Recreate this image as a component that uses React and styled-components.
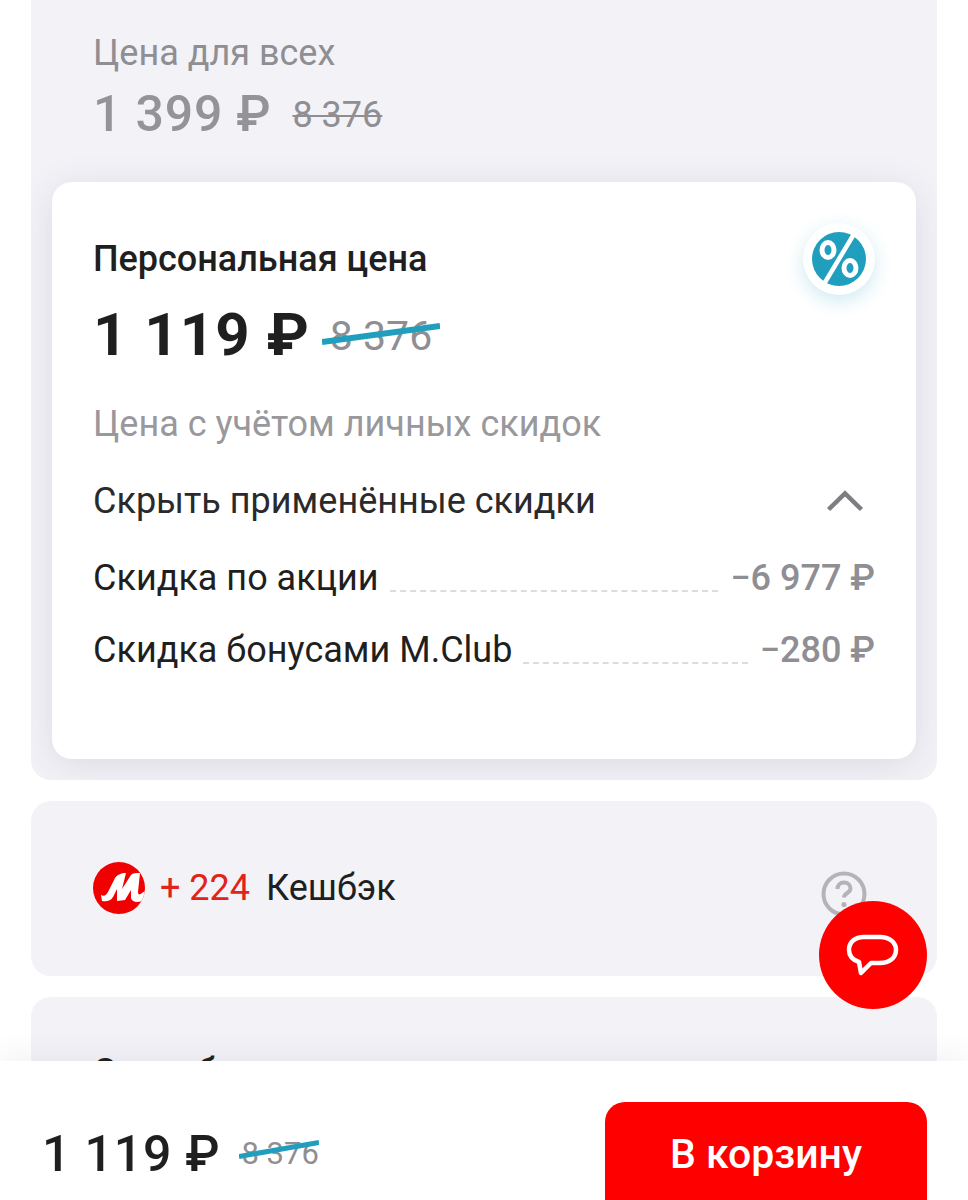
import React from "react";
import styled, { createGlobalStyle } from "styled-components";

const GlobalStyle = createGlobalStyle`
  html, body {
    margin: 0;
    padding: 0;
    background: #fff;
  }
  body {
    font-family: Roboto, "Liberation Sans", sans-serif;
    color: #1f1f1f;
  }
`;

const Page = styled.div`
  position: relative;
  width: 968px;
  height: 1200px;
  overflow: hidden;
  background: #fff;
`;

const Content = styled.div`
  display: flex;
  flex-direction: column;
  gap: 21px;
  padding: 0 31px;
  margin-top: -24px;
`;

const Panel = styled.section`
  background: #f2f2f7;
  border-radius: 20px;
  height: ${(p) => p.$height}px;
  box-sizing: border-box;
  padding: ${(p) => p.$padding};
  overflow: hidden;
`;

const GuestLabel = styled.div`
  font-size: 36px;
  line-height: 40px;
  color: #8e8e93;
  margin-left: 62px;
`;

const PriceRow = styled.div`
  display: flex;
  align-items: baseline;
  gap: ${(p) => p.$gap || 22}px;
  margin-left: ${(p) => p.$left || 0}px;
  margin-top: ${(p) => p.$top || 0}px;
`;

const Price = styled.span`
  font-size: ${(p) => p.$size}px;
  font-weight: ${(p) => p.$weight || 500};
  line-height: 1.2;
  letter-spacing: ${(p) => p.$spacing || 0}px;
  color: ${(p) => p.$color || "#1f1f1f"};
  white-space: nowrap;
`;

const OldPrice = styled.span`
  position: relative;
  top: -${(p) => p.$raise || 5}px;
  font-size: ${(p) => p.$size || 36}px;
  color: #8e8e93;
  white-space: nowrap;
  text-decoration: ${(p) => (p.$struck ? "line-through" : "none")};
  text-decoration-thickness: 2px;
`;

const TealStrike = styled.svg`
  position: absolute;
  left: ${(p) => p.$left}px;
  top: ${(p) => p.$top}px;
  width: ${(p) => p.$w}px;
  height: ${(p) => p.$h}px;
`;

const Card = styled.div`
  position: relative;
  background: #fff;
  border-radius: 20px;
  height: 577px;
  margin-top: 38px;
  margin-left: 21px;
  margin-right: 21px;
  box-sizing: border-box;
  padding: 55px 41px 0 41px;
  box-shadow: 0 6px 36px rgba(60, 60, 80, 0.12);
`;

const CardTitle = styled.div`
  font-size: 36px;
  line-height: 44px;
  font-weight: 500;
  color: #1f1f1f;
`;

const Hint = styled.div`
  font-size: 36px;
  line-height: 44px;
  color: #98989d;
  margin-top: 31px;
`;

const ToggleRow = styled.div`
  display: flex;
  align-items: center;
  justify-content: space-between;
  margin-top: 33px;
  font-size: 36px;
  line-height: 44px;
  color: #2a2a2d;
`;

const Discounts = styled.div`
  display: flex;
  flex-direction: column;
  gap: 28px;
  margin-top: 33px;
`;

const DiscountRow = styled.div`
  display: flex;
  align-items: baseline;
  font-size: 36px;
  line-height: 44px;
`;

const DiscountName = styled.span`
  color: #1f1f1f;
  white-space: nowrap;
`;

const Dots = styled.span`
  flex: 1;
  border-bottom: 2px dashed #dcdcdf;
  margin: 0 12px 0 11px;
  transform: translateY(2px);
`;

const DiscountValue = styled.span`
  color: #8e8e93;
  font-weight: 500;
  white-space: nowrap;
`;

const PercentBadge = styled.div`
  position: absolute;
  top: 41px;
  right: 41px;
  width: 72px;
  height: 72px;
  border-radius: 50%;
  background: #fff;
  display: flex;
  align-items: center;
  justify-content: center;
  box-shadow: 0 6px 18px rgba(30, 160, 190, 0.22);
`;

const CashbackRow = styled.div`
  display: flex;
  align-items: center;
  font-size: 36px;
  line-height: 44px;
`;

const Bonus = styled.span`
  color: #e2231a;
  margin-left: 15px;
`;

const CashbackLabel = styled.span`
  color: #1f1f1f;
  margin-left: 16px;
`;

const HelpIcon = styled.svg`
  width: 46px;
  height: 46px;
  margin-left: auto;
  margin-top: 12px;
`;

const SectionTitle = styled.div`
  font-size: 36px;
  line-height: 44px;
  font-weight: 500;
  margin-left: 42px;
`;

const ChatButton = styled.button`
  position: absolute;
  left: 819px;
  top: 901px;
  width: 108px;
  height: 108px;
  border: none;
  border-radius: 50%;
  background: #ff0000;
  display: flex;
  align-items: center;
  justify-content: center;
  padding: 0;
`;

const BottomBar = styled.div`
  position: absolute;
  left: 0;
  right: 0;
  top: 1061px;
  height: 139px;
  background: #fff;
  box-shadow: 0 -8px 24px rgba(60, 60, 80, 0.06);
  display: flex;
  align-items: flex-start;
  justify-content: space-between;
  padding: 41px 41px 0 42px;
  box-sizing: border-box;
`;

const BuyButton = styled.button`
  width: 322px;
  height: 120px;
  border: none;
  border-radius: 20px;
  background: #ff0000;
  color: #fff;
  font-family: inherit;
  font-size: 41px;
  font-weight: 500;
  padding: 0 0 17px;
`;

const Strike = ({ left, top, w, h, thick = 6 }) => (
  <TealStrike $left={left} $top={top} $w={w} $h={h} viewBox={`0 0 ${w} ${h}`}>
    <line x1="0" y1={h - thick / 2} x2={w} y2={thick / 2} stroke="#1f9fbd" strokeWidth={thick} />
  </TealStrike>
);

export default function App() {
  return (
    <Page>
      <GlobalStyle />
      <Content>
        <Panel $height={804} $padding="57px 0 0">
          <GuestLabel>Цена для всех</GuestLabel>
          <PriceRow $left={62} $top={11} $gap={21}>
            <Price $size={50} $color="#939398" $spacing={0.8}>1 399 ₽</Price>
            <OldPrice $size={36} $raise={4} $struck>8 376</OldPrice>
          </PriceRow>
          <Card>
            <CardTitle>Персональная цена</CardTitle>
            <PriceRow $top={18} $gap={20}>
              <Price $size={60} $weight={700} $spacing={1}>1 119 ₽</Price>
              <OldPrice $size={41}>
                8 376
                <Strike left={-8} top={11} w={118} h={22} />
              </OldPrice>
            </PriceRow>
            <Hint>Цена с учётом личных скидок</Hint>
            <ToggleRow>
              Скрыть применённые скидки
              <svg width="38" height="22" viewBox="0 0 38 22" style={{ marginRight: 11 }}>
                <path d="M2.5 19.5 19 3.5l16.5 16" fill="none" stroke="#7d7d82" strokeWidth="4.5" />
              </svg>
            </ToggleRow>
            <Discounts>
              <DiscountRow>
                <DiscountName>Скидка по акции</DiscountName>
                <Dots />
                <DiscountValue>−6 977 ₽</DiscountValue>
              </DiscountRow>
              <DiscountRow>
                <DiscountName>Скидка бонусами M.Club</DiscountName>
                <Dots />
                <DiscountValue>−280 ₽</DiscountValue>
              </DiscountRow>
            </Discounts>
            <PercentBadge>
              <svg width="54" height="54" viewBox="0 0 54 54">
                <circle cx="27" cy="27" r="27" fill="#1f9fbd" />
                <line x1="42" y1="2" x2="12" y2="52" stroke="#fff" strokeWidth="4.5" />
                <ellipse cx="16" cy="18" rx="6" ry="7.5" fill="none" stroke="#fff" strokeWidth="5" />
                <ellipse cx="38" cy="36" rx="6" ry="7.5" fill="none" stroke="#fff" strokeWidth="5" />
              </svg>
            </PercentBadge>
          </Card>
        </Panel>
        <Panel $height={175} $padding="58px 70px 0 62px">
          <CashbackRow>
            <svg width="52" height="52" viewBox="0 0 52 52">
              <defs>
                <clipPath id="logoClip">
                  <circle cx="26" cy="26" r="26" />
                </clipPath>
              </defs>
              <circle cx="26" cy="26" r="26" fill="#f00000" />
              <g clipPath="url(#logoClip)">
                <path
                  d="M8 33C11 35 14 33 16 28L22 16C24 13 28 11 33 11L29 27 38 13C40 11 43 11 47 11L45 30C45 33 47 33 49 31L52 29V45L49 39C44 41 39 40 38 36L38 28 32 38 24 39 24 27 20 35C18 39 13 40 9 39Z"
                  fill="#fff"
                />
              </g>
            </svg>
            <Bonus>+ 224</Bonus>
            <CashbackLabel>Кешбэк</CashbackLabel>
            <HelpIcon viewBox="0 0 46 46">
              <circle cx="23" cy="23" r="20.5" fill="none" stroke="#b4b4b8" strokeWidth="4" />
              <path d="M16.5 18c0-4 3-6.500 6.500-6.500s6.500 2.500 6.500 6c0 4.500-6.500 4.500-6.500 9" fill="none" stroke="#b4b4b8" strokeWidth="4" />
              <circle cx="23" cy="33.500" r="2.600" fill="#b4b4b8" />
            </HelpIcon>
          </CashbackRow>
        </Panel>
        <Panel $height={300} $padding="53px 20px 0 20px">
          <SectionTitle>Способы оплаты</SectionTitle>
        </Panel>
      </Content>
      <ChatButton aria-label="Чат">
        <svg width="54" height="44" viewBox="0 0 54 44">
          <path
            d="M18 4h16c9 0 16 5 16 13s-7 13-16 13H25L15 40 13 29C7 27 3 23 3 17 3 9 9 4 18 4z"
            fill="none"
            stroke="#fff"
            strokeWidth="4.5"
            strokeLinejoin="round"
          />
        </svg>
      </ChatButton>
      <BottomBar>
        <PriceRow $top={22} $gap={21}>
          <Price $size={50} $weight={500} $spacing={0.8}>1 119 ₽</Price>
          <OldPrice $size={31} $raise={7}>
            8 376
            <Strike left={-2} top={5} w={80} h={19} thick={5} />
          </OldPrice>
        </PriceRow>
        <BuyButton>В корзину</BuyButton>
      </BottomBar>
    </Page>
  );
}
